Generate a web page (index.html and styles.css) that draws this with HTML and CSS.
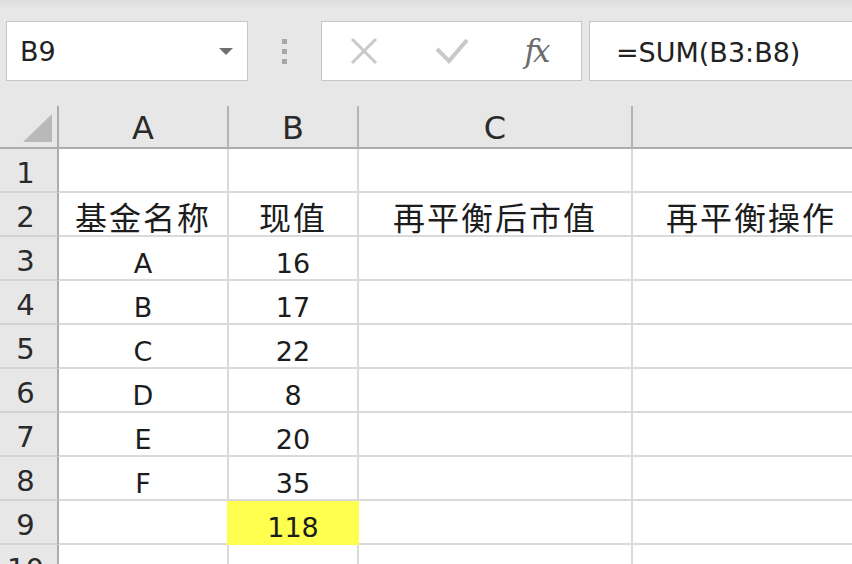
FILE: index.html
```html
<!DOCTYPE html>
<html lang="zh-CN">
<head>
<meta charset="utf-8">
<title>Sheet</title>
<link rel="stylesheet" href="styles.css">
</head>
<body>
<div class="app">
  <div class="toolbar">
    <div class="namebox"><span class="ref">B9</span><span class="caret"></span></div>
    <div class="grip"><i></i><i></i><i></i></div>
    <div class="fbtns">
      <span class="btn btn-x"><svg width="30" height="28" viewBox="0 0 30 28"><path d="M3 2 L27 26 M27 2 L3 26" stroke="#c9c9c9" stroke-width="3" fill="none"/></svg></span>
      <span class="btn btn-ok"><svg width="36" height="30" viewBox="0 0 36 30"><polyline points="3,13 15,25 33,4" stroke="#c9c9c9" stroke-width="4" fill="none"/></svg></span>
      <span class="btn btn-fx">fx</span>
    </div>
    <div class="formula">=SUM(B3:B8)</div>
  </div>
  <div class="sheet">
    <div class="corner"><span class="tri"></span></div>
    <div class="ch">A</div>
    <div class="ch">B</div>
    <div class="ch">C</div>
    <div class="ch">&nbsp;</div>

    <div class="rh">1</div><div class="c"></div><div class="c"></div><div class="c"></div><div class="c"></div>
    <div class="rh">2</div><div class="c cjk">基金名称</div><div class="c cjk">现值</div><div class="c cjk">再平衡后市值</div><div class="c cjk">再平衡操作</div>
    <div class="rh">3</div><div class="c">A</div><div class="c">16</div><div class="c"></div><div class="c"></div>
    <div class="rh">4</div><div class="c">B</div><div class="c">17</div><div class="c"></div><div class="c"></div>
    <div class="rh">5</div><div class="c">C</div><div class="c">22</div><div class="c"></div><div class="c"></div>
    <div class="rh">6</div><div class="c">D</div><div class="c">8</div><div class="c"></div><div class="c"></div>
    <div class="rh">7</div><div class="c">E</div><div class="c">20</div><div class="c"></div><div class="c"></div>
    <div class="rh">8</div><div class="c">F</div><div class="c">35</div><div class="c"></div><div class="c"></div>
    <div class="rh">9</div><div class="c"></div><div class="c hl">118</div><div class="c"></div><div class="c"></div>
    <div class="rh">10</div><div class="c"></div><div class="c"></div><div class="c"></div><div class="c"></div>
  </div>
</div>
</body>
</html>
```
FILE: styles.css
```css
html, body {
  margin: 0;
  padding: 0;
  background: #e6e6e6;
}
.app {
  width: 852px;
  height: 564px;
  overflow: hidden;
  background: #e7e7e7;
  font-family: "DejaVu Sans", "Noto Sans CJK SC", sans-serif;
  color: #1c1c1c;
}
.toolbar {
  height: 106px;
  box-sizing: border-box;
  padding: 21px 0 0 6px;
  display: flex;
  align-items: flex-start;
  background: linear-gradient(#dcdcdc 0, #e7e7e7 9px, #e7e7e7 100%);
}
.namebox {
  width: 242px;
  height: 60px;
  box-sizing: border-box;
  background: #fff;
  border: 1px solid #c6c6c6;
  display: flex;
  align-items: center;
  justify-content: space-between;
  padding: 0 14px 0 13px;
}
.ref {
  font-size: 27px;
  color: #222;
}
.caret {
  width: 0;
  height: 0;
  border-left: 7px solid transparent;
  border-right: 7px solid transparent;
  border-top: 7px solid #6f6f6f;
}
.grip {
  width: 73px;
  height: 60px;
  display: flex;
  flex-direction: column;
  align-items: center;
  justify-content: center;
  gap: 5px;
}
.grip i {
  display: block;
  width: 5px;
  height: 5px;
  background: #a8a8a8;
}
.fbtns {
  width: 261px;
  height: 60px;
  box-sizing: border-box;
  background: #fff;
  border: 1px solid #c6c6c6;
  display: flex;
  align-items: center;
}
.btn {
  display: flex;
  align-items: center;
  justify-content: center;
}
.btn-x { width: 84px; }
.btn-ok { width: 92px; }
.btn-fx {
  width: 76px;
  font-family: "DejaVu Serif", serif;
  font-style: italic;
  font-size: 31px;
  color: #6c6c6c;
  letter-spacing: -3px;
  padding-right: 4px;
}
.formula {
  flex: 1;
  height: 60px;
  margin-left: 7px;
  margin-right: -10px;
  box-sizing: border-box;
  background: #fff;
  border: 1px solid #c6c6c6;
  display: flex;
  align-items: center;
  padding: 2px 0 0 26px;
  font-size: 27px;
  color: #222;
}
.sheet {
  display: grid;
  grid-template-columns: 59px 170px 130px 274px 238px;
  grid-template-rows: 43px;
  grid-auto-rows: 44px;
}
.sheet > div {
  box-sizing: border-box;
  display: flex;
  align-items: flex-end;
  justify-content: center;
  white-space: nowrap;
}
.corner {
  background: #e7e7e7;
  border-right: 2px solid #acacac;
  border-bottom: 2px solid #acacac;
  justify-content: flex-end !important;
  padding: 0 5px 5px 0;
}
.tri {
  width: 0;
  height: 0;
  border-left: 29px solid transparent;
  border-bottom: 28px solid #b9b9b9;
}
.ch {
  background: #e7e7e7;
  border-right: 2px solid #b4b4b4;
  border-bottom: 2px solid #acacac;
  font-size: 32px;
  color: #2a2a2a;
  line-height: 1.16;
}
.rh {
  background: #e7e7e7;
  border-right: 2px solid #acacac;
  border-bottom: 2px solid #d2d2d2;
  font-size: 29px;
  color: #2a2a2a;
  line-height: 1.16;
  padding-right: 6px;
}
.c {
  background: #fff;
  border-right: 2px solid #dadada;
  border-bottom: 2px solid #dadada;
  font-size: 27px;
  line-height: 1.16;
}
.cjk {
  font-family: "Noto Sans CJK SC", sans-serif;
  font-size: 32px;
  letter-spacing: 2px;
  line-height: 1.2;
  padding-bottom: 0;
}
.hl {
  background: #ffff50;
  border-color: #ffff50;
  box-shadow: -2px 0 0 #ffff50;
}
```
